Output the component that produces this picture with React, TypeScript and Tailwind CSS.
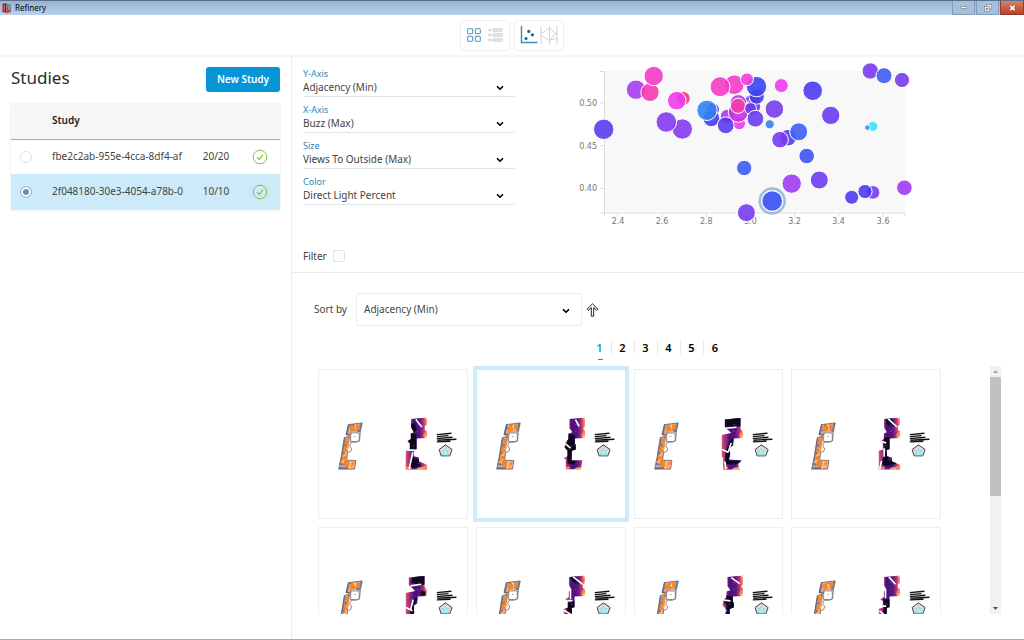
import React, { useState } from "react";
import clsx from "clsx";
import { FiChevronDown } from "react-icons/fi";

const studies = [
  { id: "fbe2c2ab-955e-4cca-8df4-af", progress: "20/20" },
  { id: "2f048180-30e3-4054-a78b-0", progress: "10/10" },
];

const metrics = [
  "Adjacency (Min)",
  "Buzz (Max)",
  "Views To Outside (Max)",
  "Direct Light Percent",
];

const axes = [
  { id: "y-axis", label: "Y-Axis", value: "Adjacency (Min)" },
  { id: "x-axis", label: "X-Axis", value: "Buzz (Max)" },
  { id: "size", label: "Size", value: "Views To Outside (Max)" },
  { id: "color", label: "Color", value: "Direct Light Percent" },
];

// x, y, radius, color
const bubbles: [number, number, number, string][] = [
  [66, 34.7, 9.7, "#a63cf0"],
  [80, 37.3, 9.2, "#f53bb0"],
  [83.7, 21, 9.7, "#f53bc4"],
  [113.3, 43.4, 7, "#f53b72"],
  [106.7, 45.7, 9.3, "#ee3bf0"],
  [33.7, 74.3, 10.2, "#5a3bf0"],
  [112.3, 74, 10.2, "#843bf0"],
  [96.3, 67, 10.3, "#843bf0"],
  [164.3, 29.7, 9.8, "#f53bc8"],
  [150.1, 31.7, 10, "#f53bc8"],
  [157.3, 61.3, 7, "#a63bf0"],
  [143, 54.5, 6.5, "#6a3bf0"],
  [141.3, 63.3, 8.4, "#4b3bf0"],
  [137, 55.3, 10.2, "#3181f2"],
  [169.3, 68.6, 6.2, "#ee3bf0"],
  [182, 48, 8.4, "#7a3bf0"],
  [183.3, 51.5, 7.4, "#8a3bf0"],
  [168.3, 48, 8.4, "#b03bf0"],
  [168.3, 57.3, 10, "#c532de"],
  [168, 50.8, 7.6, "#f53bac"],
  [155.7, 70.3, 8.4, "#5a3bf0"],
  [186.7, 41.6, 7.6, "#3f3bf0"],
  [186.5, 31.6, 10.2, "#3945f0"],
  [177, 24.3, 6.4, "#f53be0"],
  [180.5, 53.5, 5.9, "#6a3bf0"],
  [185.4, 63.7, 8.4, "#6a3bf0"],
  [204.4, 54, 9.3, "#783bf0"],
  [211.3, 30.6, 7, "#ee3bf0"],
  [199.7, 69.3, 4.6, "#3b7ff2"],
  [242.7, 35.7, 9.8, "#4b3bf0"],
  [260.7, 60.4, 9.2, "#6a3bf0"],
  [300.3, 16, 8.2, "#783bf0"],
  [314, 20.7, 8, "#3f5bf2"],
  [332, 25, 7.6, "#783bf0"],
  [302.8, 71.4, 5, "#38e4f5"],
  [297.4, 72.6, 2.8, "#3b91f2"],
  [218, 82.7, 8.3, "#553bf0"],
  [210, 84.7, 8.3, "#783bf0"],
  [228.7, 76.8, 9, "#3f5ff2"],
  [236.7, 101, 7.8, "#3f53f4"],
  [174.2, 113, 7.7, "#3f5bf4"],
  [221.7, 128.6, 9.7, "#a03bf0"],
  [249.3, 125, 9, "#6f3bf0"],
  [281.7, 142.3, 7, "#4b3bf0"],
  [303.1, 137.4, 6.8, "#783bf0"],
  [295, 136.5, 7.1, "#4b3bf0"],
  [334.4, 132.7, 7.8, "#a03bf0"],
  [176.4, 157.7, 9, "#783bf0"],
];

const yTicks = [
  { y: 48, label: "0.50" },
  { y: 90.7, label: "0.45" },
  { y: 133.4, label: "0.40" },
];

const xTicks = [
  { x: 48, label: "2.4" },
  { x: 92, label: "2.6" },
  { x: 136.3, label: "2.8" },
  { x: 180.4, label: "3.0" },
  { x: 224.6, label: "3.2" },
  { x: 268.6, label: "3.4" },
  { x: 313.2, label: "3.6" },
];

type Design = { shape: string; dark: string; cuts: string; mosaic: string };

const shapeA =
  "M280 150L327 146V168L321 172V182L328 188V207L296 209V241L288 243V262L303 266L304 278L328 288V303L263 302V246L276 243V222L268 218L279 210V194L288 190L280 176Z";
const shapeB =
  "M281 150L328 146V172L322 178L328 186V207L297 209V224L300 228V242L288 246L287 274H320L315 302H270V272L263 268L275 262V245L266 235L268 222L278 210V194L290 190L281 178Z";
const shapeC =
  "M273 152L320 147V178L327 190V207L300 209L298 230L288 236L289 258L285 272L324 275L313 286L317 303H268V267L263 264V198L292 192L273 174Z";

const designs: Design[] = [
  {
    shape: shapeA,
    dark: "M281 164L292 162L296 186L288 190L281 178ZM275 194L296 196V240L276 243L270 232ZM284 264L304 274L300 284L310 290L284 298L276 290Z",
    cuts: "M294 152L312 174M262 244H292M285 250L274 300",
    mosaic: "M96 167L112 186M104 166L124 190",
  },
  {
    shape: shapeB,
    dark: "M278 196L297 198V224L300 242L288 248L287 276L300 277L296 288L276 284L275 246L266 238L274 222Z",
    cuts: "M299 152L310 172M268 224L284 238",
    mosaic: "M92 180L110 168M100 188L122 170",
  },
  {
    shape: shapeC,
    dark: "M273 152L320 147V172L273 174ZM288 214L298 210L296 230L288 236L289 256L285 274L322 276L306 286H274L276 250Z",
    cuts: "M273 178L308 175M292 222L284 248M265 242L284 251M273 278L276 300",
    mosaic: "M100 170L128 190",
  },
  {
    shape: shapeA,
    dark: "M286 152L304 150L312 172L290 170ZM280 206L296 206V240L286 246L278 226ZM280 252L290 248L294 276L320 277L312 286L284 292L274 286Z",
    cuts: "M292 150L318 174M262 216L286 222M280 238V264M272 276L266 304",
    mosaic: "M100 168L130 188M94 186L116 176",
  },
  {
    shape: shapeC,
    dark: "M284 151L320 147V172L292 174L288 168H280ZM310 192L322 194V206L308 206ZM285 216L298 214L290 236L289 272H276L280 240Z",
    cuts: "M278 177L310 172M286 218L278 250M264 242L284 252",
    mosaic: "M96 168L124 190",
  },
  {
    shape: shapeA,
    dark: "M282 154L300 150L312 168L300 172ZM274 228L296 222V240L288 262L300 280L272 282Z",
    cuts: "M292 150L320 172M284 192V216M262 221H290M264 250L284 262",
    mosaic: "M98 166L128 190M118 166L130 180",
  },
  {
    shape: shapeB,
    dark: "M278 206L297 209V224L302 242L288 248L287 274L276 268L279 236L272 226Z",
    cuts: "M292 152L318 170M264 219L290 222M264 258L278 250",
    mosaic: "M94 184L112 168M106 186L126 172",
  },
  {
    shape: shapeA,
    dark: "M278 216L296 218V240L286 248L290 268L274 280L280 240Z",
    cuts: "M294 150L314 172M284 190V214M262 238H286M266 252L280 264",
    mosaic: "M96 182L112 168M114 166L124 188",
  },
];

function AppLogo() {
  return (
    <svg width="10" height="11" viewBox="0 0 20 22" aria-hidden="true">
      <path d="M1 2L9 0V20L1 18Z" fill="#a8141c" />
      <path d="M9 1L18 4V11L9 12Z" fill="#4f8f6a" />
      <path d="M9 11L18 10V18L10 21Z" fill="#c3483c" />
      <path d="M12 4L17 6V14L12 13Z" fill="#7d93b8" />
      <path d="M3 4L6 3V17L3 16Z" fill="#d8525a" />
    </svg>
  );
}

function TitleBar() {
  return (
    <div className="flex h-[15px] shrink-0 items-center justify-between border-t border-[#5f7186] bg-linear-to-b from-[#97b3d3] to-[#b9d1ec] pl-[2px]">
      <div className="flex items-center gap-[3px] text-[8px] leading-3 text-black">
        <AppLogo />
        Refinery
      </div>
      <div className="flex h-full gap-px">
        <button
          aria-label="Minimize"
          className="flex h-[14px] w-[23px] items-center justify-center border border-t-0 border-[#7f9cbc] bg-[#a6c0dc]"
        >
          <svg width="7" height="3" viewBox="0 0 7 3">
            <rect x="0.5" y="0.5" width="6" height="2" rx="0.5" fill="#f4f4f4" stroke="#7d858e" strokeWidth="0.7" />
          </svg>
        </button>
        <button
          aria-label="Restore"
          className="flex h-[14px] w-[23px] items-center justify-center border border-t-0 border-[#7f9cbc] bg-[#a6c0dc]"
        >
          <svg width="8" height="8" viewBox="0 0 8 8" fill="#f4f4f4" stroke="#7d858e" strokeWidth="0.7">
            <rect x="2.5" y="0.5" width="5" height="4.5" />
            <rect x="0.5" y="2.5" width="5" height="5" />
            <rect x="2.2" y="4.2" width="1.6" height="1.6" fill="#a6c0dc" />
          </svg>
        </button>
        <button
          aria-label="Close"
          className="flex h-[14px] w-6 items-center justify-center border border-t-0 border-[#8e3a32] bg-linear-to-b from-[#d1836f] to-[#c23a20]"
        >
          <svg width="7" height="6" viewBox="0 0 8 7">
            <path d="M1.5 1L6.5 6M6.5 1L1.5 6" stroke="#7c4c48" strokeWidth="3" />
            <path d="M1.5 1L6.5 6M6.5 1L1.5 6" stroke="#fff" strokeWidth="2" />
          </svg>
        </button>
      </div>
    </div>
  );
}

function Toolbar() {
  return (
    <header className="flex h-[42px] shrink-0 items-center justify-center gap-1 border-b-2 border-[#f5f5f5]">
      <div className="flex h-[31px] items-center gap-[7px] rounded border border-[#efefef] px-[6px]">
        <button aria-label="Grid view">
          <svg width="14" height="14" viewBox="0 0 14 14" fill="none" stroke="#3f93b5">
            <rect x="0.7" y="0.7" width="5" height="5" rx="0.5" />
            <rect x="8.3" y="0.7" width="5" height="5" rx="0.5" />
            <rect x="0.7" y="8.3" width="5" height="5" rx="0.5" />
            <rect x="8.3" y="8.3" width="5" height="5" rx="0.5" />
          </svg>
        </button>
        <button aria-label="List view">
          <svg width="15" height="14" viewBox="0 0 15 14" fill="#e4e6e8" stroke="#cfd3d6" strokeWidth="0.8">
            <path d="M3 2H5M3 7H5M3 12H5" />
            <circle cx="1.7" cy="2" r="1.1" />
            <circle cx="1.7" cy="7" r="1.1" />
            <circle cx="1.7" cy="12" r="1.1" />
            <rect x="4.8" y="0.6" width="9.7" height="2.8" rx="0.8" />
            <rect x="4.8" y="5.6" width="9.7" height="2.8" rx="0.8" />
            <rect x="4.8" y="10.6" width="9.7" height="2.8" rx="0.8" />
          </svg>
        </button>
      </div>
      <div className="flex h-[31px] items-center gap-[2px] rounded border border-[#efefef] px-[5px]">
        <button aria-label="Scatter plot">
          <svg width="18" height="18" viewBox="0 0 18 18">
            <path d="M1.5 0V16.5H17.5" fill="none" stroke="#3f93b5" strokeWidth="1.5" />
            <g fill="#12689a">
              <circle cx="6" cy="12.5" r="1.6" />
              <circle cx="8.8" cy="5.4" r="1.6" />
              <circle cx="12.4" cy="8.8" r="1.6" />
            </g>
          </svg>
        </button>
        <button aria-label="Parallel coordinates">
          <svg width="18" height="18" viewBox="0 0 18 18" fill="none" stroke="#cfd3d6">
            <path d="M1 0V18M9.5 0V18M17 0V18" />
            <path d="M1 8L9.5 2L17 9M1 9L9.5 14.5L17 6M9.5 14L17 12.5" />
          </svg>
        </button>
      </div>
    </header>
  );
}

function Sidebar() {
  const [selected, setSelected] = useState(studies[1].id);

  return (
    <aside className="w-[292px] shrink-0 border-r border-[#eeeeee] px-[11px] pt-[10px]">
      <div className="flex h-[25px] justify-between">
        <h1 className="text-[17px] leading-[22px] text-[#2b2b2b]">Studies</h1>
        <button className="w-[74px] rounded-[3px] bg-[#0696d7] text-[10px] font-semibold text-white">
          New Study
        </button>
      </div>
      <table className="mt-[11px] w-full table-fixed text-left text-[10px] shadow-[0_1px_2px_rgba(0,0,0,0.14)]">
        <thead>
          <tr className="h-9 border-b border-[#a8a8a8] bg-[#f6f6f6] text-[#222]">
            <th className="w-[41px]" />
            <th className="w-[132px] font-semibold">Study</th>
            <th className="w-[64px]" />
            <th />
          </tr>
        </thead>
        <tbody>
          {studies.map((study) => (
            <tr
              key={study.id}
              className={clsx(
                "h-[35px] text-[#444]",
                selected === study.id ? "bg-[#cceaf9]" : "bg-white"
              )}
            >
              <td className="pl-[9px] align-middle">
                <input
                  type="radio"
                  name="study"
                  aria-label={study.id}
                  checked={selected === study.id}
                  onChange={() => setSelected(study.id)}
                  className="block size-3 appearance-none rounded-full border border-[#dfe3e8] bg-white checked:border-[#a9bccf] checked:bg-[#6f8db3] checked:shadow-[inset_0_0_0_2px_white]"
                />
              </td>
              <td>
                <div className="w-[132px] overflow-hidden whitespace-nowrap">{study.id}</div>
              </td>
              <td className="text-center">{study.progress}</td>
              <td>
                <svg className="ml-1" width="16" height="16" viewBox="0 0 16 16" fill="none" stroke="#87bc40">
                  <circle cx="8" cy="8" r="6.8" />
                  <path d="M5 8.4L7.2 10.4L11 5.8" strokeWidth="1.2" />
                </svg>
              </td>
            </tr>
          ))}
        </tbody>
      </table>
    </aside>
  );
}

function ScatterPlot() {
  return (
    <svg width="350" height="173" viewBox="0 2 350 173" className="ml-[55px] shrink-0">
      <rect x="34" y="16" width="301" height="141" fill="#f8f8f8" />
      <path d="M30 16.5H34.5V161M30 158H335V161" fill="none" stroke="#dcdcdc" />
      <g fill="#777" className="font-['DejaVu_Sans'] text-[8px]">
        {yTicks.map((tick) => (
          <g key={tick.label}>
            <path d={`M30 ${tick.y}H34`} stroke="#dcdcdc" />
            <text x="27" y={tick.y + 3} textAnchor="end">
              {tick.label}
            </text>
          </g>
        ))}
        {xTicks.map((tick) => (
          <g key={tick.label}>
            <path d={`M${tick.x} 158V162`} stroke="#dcdcdc" />
            <text x={tick.x} y="169" textAnchor="middle">
              {tick.label}
            </text>
          </g>
        ))}
      </g>
      <g stroke="#fff" strokeWidth="1" fillOpacity="0.9">
        {bubbles.map(([x, y, r, color], i) => (
          <circle key={i} cx={x} cy={y} r={r} fill={color} />
        ))}
      </g>
      <circle cx="202.2" cy="146" r="12.4" fill="#fff" stroke="#a3bbe0" strokeWidth="2.6" />
      <circle cx="202.2" cy="146" r="9.8" fill="#4a5ff3" />
    </svg>
  );
}

function ChartPanel() {
  const [filter, setFilter] = useState(false);

  return (
    <section className="flex h-[216px] shrink-0 border-b border-[#ebebeb] pl-[11px]">
      <div className="w-[212px] shrink-0 pt-[11px]">
        <div className="flex flex-col gap-[7px]">
          {axes.map((axis) => (
            <div key={axis.id} className="relative">
              <label htmlFor={axis.id} className="block text-[9px] leading-3 text-[#2b86b8]">
                {axis.label}
              </label>
              <select
                id={axis.id}
                defaultValue={axis.value}
                className="block h-[17px] w-full appearance-none border-b border-[#e1e5ea] bg-transparent pb-px text-[10px] leading-[15px] text-[#444]"
              >
                {metrics.map((m) => (
                  <option key={m}>{m}</option>
                ))}
              </select>
              <FiChevronDown
                className="pointer-events-none absolute right-[10px] bottom-1 size-[10px] text-black"
                strokeWidth={4}
              />
            </div>
          ))}
        </div>
        <label className="mt-[43px] flex h-4 items-center gap-[6px] text-[10px] text-[#444]">
          Filter
          <input
            type="checkbox"
            checked={filter}
            onChange={() => setFilter(!filter)}
            className="size-3 appearance-none rounded-[2px] border border-[#dfe5ea] bg-white checked:bg-[#0696d7]"
          />
        </label>
      </div>
      <ScatterPlot />
    </section>
  );
}

function Thumbnail({ design, index }: { design: Design; index: number }) {
  const plan = `plan-${index}`;
  const heat = `heat-${index}`;
  const fill = `fill-${index}`;

  return (
    <svg viewBox="3 3 444 444" className="block w-full" aria-hidden="true">
      <defs>
        <clipPath id={plan}>
          <path d="M91 167L133 162L126 190H102L96 204L93 232L89 252L86 274L114 275L110 301H62L70 262L79 206L90 203L84 196Z" />
        </clipPath>
        <clipPath id={heat}>
          <path d={design.shape} />
        </clipPath>
        <linearGradient id={fill} x1="0" y1="0" x2="1" y2="0">
          <stop offset="0" stopColor="#f0605d" />
          <stop offset="0.2" stopColor="#a3307e" />
          <stop offset="0.4" stopColor="#4a1079" />
          <stop offset="0.65" stopColor="#5a167e" />
          <stop offset="0.82" stopColor="#b5367a" />
          <stop offset="0.94" stopColor="#fb8761" />
        </linearGradient>
      </defs>

      {/* floor plan */}
      <g clipPath={`url(#${plan})`}>
        <rect x="55" y="155" width="85" height="150" fill="#f9a878" />
        <path
          d="M92 166L86 198M80 208L68 276M64 298H90M72 250L80 254M78 228L88 230M84 276L80 290M90 206H98M64 284L76 288M130 164L124 188"
          fill="none"
          stroke="#5f83b8"
          strokeWidth="7"
        />
        <path d={design.mosaic} stroke="#466fae" strokeWidth="4" />
        <path
          d="M94 174L106 168L112 184L98 190ZM116 166L128 168L124 184L112 180ZM82 208L96 210L93 226L80 224ZM78 230L92 234L90 250L76 248ZM72 256L86 258L84 272L70 272ZM78 280L96 276L98 292L82 296ZM100 282L110 280L106 296Z"
          fill="#fc861a"
        />
        <path d="M110 168L114 182M86 238L92 244M76 262L86 256M97 276L94 300M104 294L112 286" stroke="#fff" strokeWidth="2" />
      </g>
      <path
        d="M91 167L133 162L127 191L125 216L115 220H100L95 230L101 240L98 248L89 251L86 274L114 275L110 301H62L70 262L79 206L90 203L97 196L84 197Z"
        fill="none"
        stroke="#4c4c55"
        strokeWidth="2"
      />
      <path d="M99 192H124L124 216L116 218H98V206Z" fill="#fff" stroke="#4c4c55" strokeWidth="2" />
      <circle cx="111" cy="203" r="1.5" fill="#333" />

      {/* heat map */}
      <g clipPath={`url(#${heat})`}>
        <rect x="260" y="140" width="70" height="170" fill={`url(#${fill})`} />
        <g fill="#fb8761">
          <path d="M320 146H328V164L324 158ZM318 194L328 186V208L316 204ZM263 294H282L280 304H262ZM300 297L330 290V304H292Z" />
        </g>
        <g fill="#fed395">
          <path d="M323 146H328V152L324 151ZM322 202L328 200V208H320ZM296 300L316 299V304H296Z" />
        </g>
        <path d={design.dark} fill="#0b0714" stroke="#2d1160" strokeWidth="3" />
        <path d={design.cuts} fill="none" stroke="#fff" strokeWidth="5" />
        <path d="M300 166L303 169M286 230L288 233M298 186L300 188" stroke="#d8a6f0" strokeWidth="2" />
      </g>

      {/* legend */}
      <path
        d="M357 197L401 193M357 203L392 200M357 209L404 205M359 214L416 211M357 219L398 217"
        stroke="#111"
        strokeWidth="4"
      />
      <path d="M383 228L403 242L396 261H370L364 242Z" fill="#dfe2e2" stroke="#3c3c3c" strokeWidth="3" />
      <path d="M383 228V247M364 242L383 247L403 242M370 261L383 247L396 261" stroke="#9a9f9f" fill="none" />
      <path d="M374 259L377 246L383 238L389 246L394 259Z" fill="#a5eef0" stroke="#6fb9bd" />
    </svg>
  );
}

function Gallery() {
  const [page, setPage] = useState(1);
  const [active, setActive] = useState(1);

  return (
    <section className="flex min-h-0 flex-1 flex-col pt-5 pr-[23px] pb-[25px] pl-[22px]">
      <div className="flex items-center text-[10px] text-[#444]">
        <label htmlFor="sort-by" className="w-[42px]">
          Sort by
        </label>
        <div className="relative">
          <select
            id="sort-by"
            defaultValue="Adjacency (Min)"
            className="block h-[33px] w-[226px] appearance-none rounded-[2px] border border-[#ececec] bg-white px-[7px] pb-px text-[10px]"
          >
            {metrics.map((m) => (
              <option key={m}>{m}</option>
            ))}
          </select>
          <FiChevronDown
            className="pointer-events-none absolute right-[11px] bottom-[10px] size-[10px] text-black"
            strokeWidth={4}
          />
        </div>
        <button aria-label="Sort ascending" className="ml-1">
          <svg width="13" height="14" viewBox="0 0 13 14" fill="#fff" stroke="#222">
            <path d="M6.5 0.8L12 6.2L10.8 7.4L7.7 4.6V13.2H5.3V4.6L2.2 7.4L1 6.2Z" />
          </svg>
        </button>
      </div>

      <nav className="mt-3 flex justify-center text-[11px] font-semibold text-black">
        {[1, 2, 3, 4, 5, 6].map((n) => (
          <button
            key={n}
            onClick={() => setPage(n)}
            className="flex h-[22px] w-[23px] flex-col items-center justify-between"
            aria-current={page === n}
          >
            <span
              className={clsx(
                "mt-[3px] w-full leading-[13px]",
                n < 6 && "border-r border-[#e8e8e8]",
                page === n && "text-[#0696d7]"
              )}
            >
              {n}
            </span>
            {page === n && <span className="h-px w-[5px] bg-[#0696d7]" />}
          </button>
        ))}
      </nav>

      <div className="mt-[6px] flex min-h-0 flex-1 justify-between">
        <div className="grid flex-1 grid-cols-4 content-start gap-2 overflow-hidden px-1 pt-[3px]">
          {designs.map((design, i) => (
            <button
              key={i}
              aria-label={`Design ${i + 1}`}
              onClick={() => setActive(i)}
              className={clsx(
                "border bg-white",
                active === i
                  ? "border-[#cceaf9] ring-3 ring-[#cceaf9]"
                  : "border-[#eceff2]"
              )}
            >
              <Thumbnail design={design} index={i} />
            </button>
          ))}
        </div>
        <div className="ml-[45px] flex w-[11px] flex-col items-center bg-[#f1f1f1]">
          <svg width="11" height="11" viewBox="0 0 11 11" className="shrink-0">
            <path d="M3 7L5.5 4L8 7Z" fill="#a3a3a3" />
          </svg>
          <div className="h-[119px] w-[11px] bg-[#c1c1c1]" />
          <svg width="11" height="11" viewBox="0 0 11 11" className="mt-auto shrink-0">
            <path d="M3 4L5.5 7L8 4Z" fill="#505050" />
          </svg>
        </div>
      </div>
    </section>
  );
}

export default function App() {
  return (
    <div className="flex h-screen flex-col border-b border-[#9fb0bd] bg-white font-['Noto_Sans',sans-serif]">
      <TitleBar />
      <Toolbar />
      <div className="flex min-h-0 flex-1">
        <Sidebar />
        <main className="flex min-w-0 flex-1 flex-col">
          <ChartPanel />
          <Gallery />
        </main>
      </div>
    </div>
  );
}
